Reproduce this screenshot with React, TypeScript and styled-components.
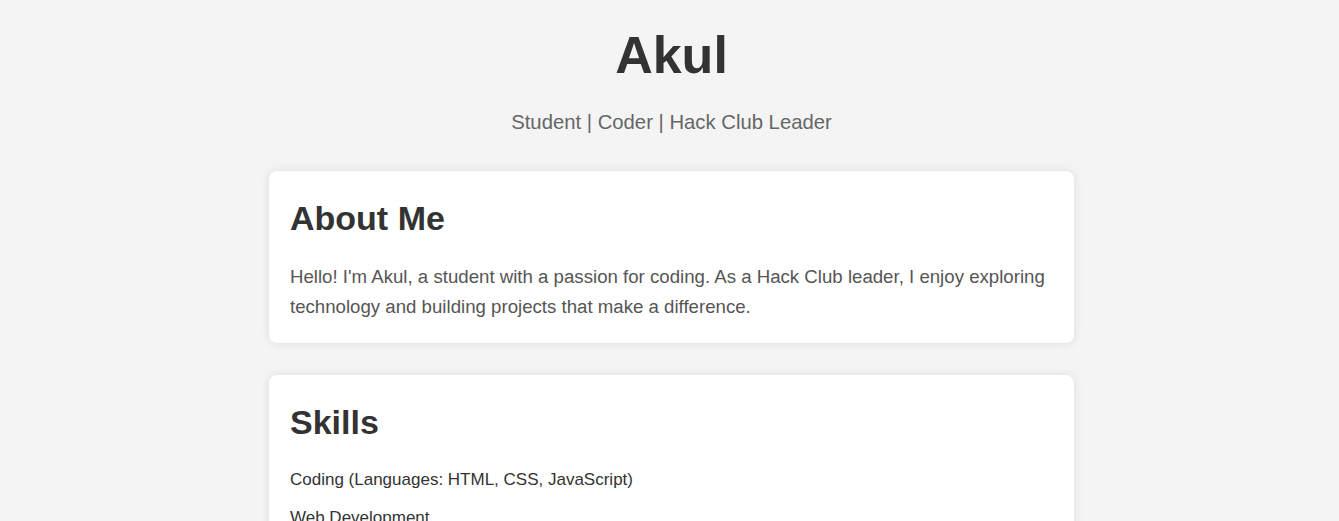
import React from "react";
import styled, { createGlobalStyle } from "styled-components";

const Global = createGlobalStyle`
  html, body { margin: 0; padding: 0; }
  body {
    background: #f4f4f4;
    font-family: "Liberation Sans", Arial, sans-serif;
    color: #333;
  }
`;

const Page = styled.div`
  padding: 23px 0 0 4px;
  display: flex;
  flex-direction: column;
  align-items: center;
`;

const Header = styled.header`
  display: flex;
  flex-direction: column;
  align-items: center;
`;

const Title = styled.h1`
  margin: 0;
  font-size: 52px;
  font-weight: bold;
  color: #333;
  line-height: 64px;
`;

const Subtitle = styled.p`
  margin: 24px 0 0;
  font-size: 20.3px;
  line-height: 23px;
  color: #666;
`;

const Card = styled.section<{ $top: number }>`
  box-sizing: border-box;
  width: 805px;
  margin-top: ${(p) => p.$top}px;
  background: #fff;
  border-radius: 8px;
  box-shadow: 0 0 10px rgba(0, 0, 0, 0.1);
  padding: 28px 21px 20.5px;
`;

const CardTitle = styled.h2`
  margin: 0;
  font-size: 34px;
  line-height: 39px;
  font-weight: bold;
  color: #333;
`;

const Body = styled.p`
  margin: 24px 0 0;
  font-size: 18.65px;
  line-height: 30px;
  color: #555;
`;

const List = styled.ul`
  list-style: none;
  margin: 28px 0 0;
  padding: 0;
  display: flex;
  flex-direction: column;
  gap: 18px;
`;

const Item = styled.li`
  font-size: 17px;
  line-height: 20px;
  color: #333;
`;

export default function App() {
  return (
    <>
      <Global />
      <Page>
        <Header>
          <Title>Akul</Title>
          <Subtitle>Student | Coder | Hack Club Leader</Subtitle>
        </Header>
        <Card $top={37}>
          <CardTitle>About Me</CardTitle>
          <Body>
            Hello! I'm Akul, a student with a passion for coding. As a Hack Club leader, I enjoy exploring
            technology and building projects that make a difference.
          </Body>
        </Card>
        <Card $top={32.5}>
          <CardTitle>Skills</CardTitle>
          <List>
            <Item>Coding (Languages: HTML, CSS, JavaScript)</Item>
            <Item>Web Development</Item>
            <Item>Problem Solving</Item>
            <Item>Leadership</Item>
          </List>
        </Card>
      </Page>
    </>
  );
}
